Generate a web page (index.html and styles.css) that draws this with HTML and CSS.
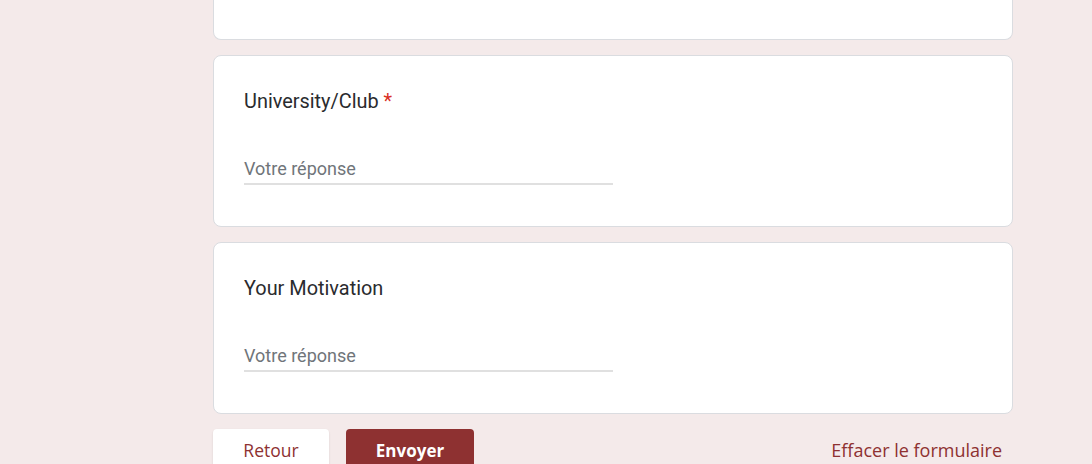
FILE: index.html
```html
<!DOCTYPE html>
<html lang="fr">
<head>
<meta charset="utf-8">
<title>Formulaire</title>
<link rel="stylesheet" href="styles.css">
</head>
<body>
<main class="form">
  <section class="card card-cut"></section>
  <section class="card">
    <div class="q-title">University/Club <span class="req">*</span></div>
    <div class="q-input">Votre réponse</div>
  </section>
  <section class="card">
    <div class="q-title">Your Motivation</div>
    <div class="q-input">Votre réponse</div>
  </section>
  <div class="actions">
    <div class="left">
      <button class="btn btn-back">Retour</button>
      <button class="btn btn-send">Envoyer</button>
    </div>
    <button class="btn btn-clear">Effacer le formulaire</button>
  </div>
</main>
</body>
</html>
```

FILE: styles.css
```css
html, body {
  margin: 0;
  padding: 0;
  background: #f4eaea;
  font-family: Roboto, "Liberation Sans", Arial, sans-serif;
  overflow: hidden;
}

.form {
  width: 800px;
  margin-left: 213px;
  display: flex;
  flex-direction: column;
  gap: 15px;
}

.card {
  background: #fff;
  border: 1px solid #dadce0;
  border-radius: 8px;
  padding: 34px 30px 40px;
  box-sizing: border-box;
  height: 172px;
}

.card-cut {
  height: 40px;
  padding: 0;
  border-top: 0;
  border-radius: 0 0 8px 8px;
}

.q-title {
  font-size: 19.9px;
  line-height: 24px;
  color: #2a2b2e;
}

.req {
  color: #d93025;
}

.q-input {
  margin-top: 43px;
  width: 369px;
  font-size: 18px;
  line-height: 24px;
  color: #70757a;
  padding-bottom: 2px;
  border-bottom: 2px solid #e0e0e0;
}

.actions {
  display: flex;
  justify-content: space-between;
  align-items: flex-start;
  margin-top: 0;
}

.left {
  display: flex;
  gap: 17px;
}

.btn {
  font-family: "Open Sans", Roboto, "Liberation Sans", sans-serif;
  font-size: 17.5px;
  height: 42px;
  border: 0;
  border-radius: 4px;
  padding: 0;
  cursor: pointer;
}

.btn-back {
  width: 116px;
  background: #fff;
  color: #8e3131;
  font-weight: 500;
  box-shadow: 0 1px 2px rgba(60, 64, 67, 0.15);
}

.btn-send {
  width: 128px;
  background: #8e3131;
  color: #fff;
  font-weight: 700;
  font-size: 17px;
}

.btn-clear {
  background: transparent;
  color: #8e3131;
  font-weight: 500;
  font-size: 18px;
  padding: 0 11px 0 8px;
}
```
